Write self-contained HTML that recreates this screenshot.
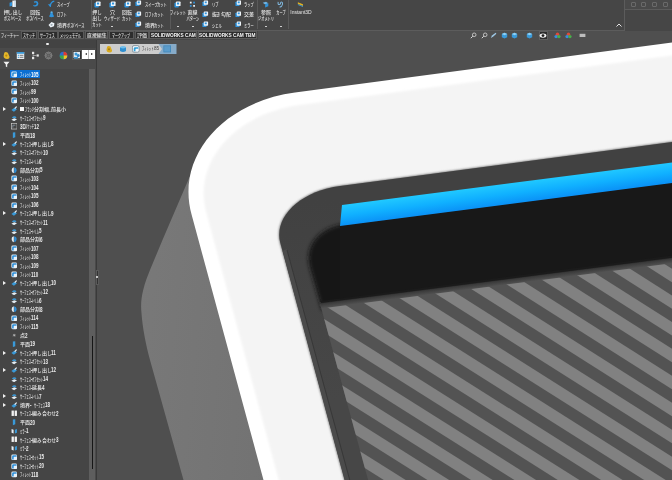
<!DOCTYPE html><html lang="ja"><head><meta charset="utf-8"><title>SOLIDWORKS</title><style>
html,body{margin:0;padding:0;}
body{width:672px;height:480px;overflow:hidden;background:#4f4f4f;position:relative;font-family:"Liberation Sans","Noto Sans CJK JP",sans-serif;color:#dcdcdc;}
#v3d{position:absolute;left:0;top:0;}
.abs{position:absolute;}
#ribbon{position:absolute;left:0;top:0;width:672px;height:30.5px;background:#464646;}
.t{position:absolute;font-size:5.0px;line-height:6px;white-space:nowrap;color:#e6e6e6;font-weight:500;}
.tc{position:absolute;font-size:5.0px;line-height:6px;white-space:nowrap;color:#e6e6e6;font-weight:500;text-align:center;transform:translateX(-50%);}
.sx{display:inline-block;vertical-align:baseline;overflow:visible;white-space:nowrap;}
.sx>span{display:inline-block;transform-origin:0 50%;white-space:nowrap;}
.ic{position:absolute;width:7px;height:7px;}
.sep{position:absolute;top:0;width:1px;height:29px;background:#5a5a5a;}
.dd{position:absolute;top:26px;width:2px;height:1px;background:#cfcfcf;}
#tabs{position:absolute;left:0;top:31px;height:9px;width:257.5px;background:#464646;}
.tab{position:absolute;top:0;height:8px;background:#2d2d2d;border:0.5px solid #5a5a5a;box-sizing:border-box;font-size:5.0px;line-height:6.6px;text-align:center;color:#e4e4e4;font-weight:500;white-space:nowrap;overflow:hidden;}
.tab.act{background:#464646;border-color:#464646;color:#e8e8e8;}
.tab.b{font-weight:bold;color:#f6f6f6;font-size:4.75px;line-height:8.6px;}
#panel{position:absolute;left:0;top:40px;width:97px;height:440px;background:#4a4a4a;border-right:1px solid #3a3a3a;box-sizing:border-box;}
#tree{position:absolute;left:0;top:29px;width:88.5px;height:411px;background:#454545;}
#sbar{position:absolute;left:88.7px;top:29px;width:6px;height:411px;background:#5e5e5e;}
.row{position:absolute;left:19.5px;font-size:5.1px;line-height:8px;height:8px;white-space:nowrap;color:#ececec;font-weight:500;}
.arw{position:absolute;left:2.8px;width:0;height:0;border-left:3px solid #f0f0f0;border-top:2.2px solid transparent;border-bottom:2.2px solid transparent;}
.ri{position:absolute;left:10.5px;width:6.5px;height:6.5px;}
</style></head><body>
<svg id="v3d" width="672" height="480" viewBox="0 0 672 480">
<defs>
<linearGradient id="gblue" gradientUnits="userSpaceOnUse" x1="500" y1="184.7" x2="502.7" y2="205.3">
<stop offset="0" stop-color="#20c8ff"/><stop offset="0.5" stop-color="#10b0ff"/><stop offset="1" stop-color="#0a90f6"/>
</linearGradient>
<linearGradient id="gside" x1="0" y1="0" x2="1" y2="0.2">
<stop offset="0" stop-color="#797979"/><stop offset="1" stop-color="#727272"/>
</linearGradient>
<linearGradient id="gopen" gradientUnits="userSpaceOnUse" x1="0" y1="200" x2="0" y2="400"><stop offset="0" stop-color="#414141"/><stop offset="1" stop-color="#474747"/></linearGradient>
<filter id="b1" x="-10%" y="-10%" width="120%" height="120%"><feGaussianBlur stdDeviation="1.2"/></filter>
<filter id="b2" x="-10%" y="-10%" width="120%" height="120%"><feGaussianBlur stdDeviation="2.2"/></filter>
<filter id="b4" x="-20%" y="-20%" width="140%" height="140%"><feGaussianBlur stdDeviation="4"/></filter>
<clipPath id="cbody"><path d="M700,38.8 L295,92.6 C222,102.3 175.5,157.4 191.7,215 L266.2,490 L700,490 Z"/></clipPath>
<clipPath id="copen"><path d="M700,138.2 L340,186 C300.1,191.3 273.3,216.9 280.3,243 L347.3,490 L700,490 Z"/></clipPath>
<clipPath id="cfloor"><path d="M319.7,302.5 L700,253.5 L700,490 L370.8,490 Z"/></clipPath>
<linearGradient id="gsh" gradientUnits="userSpaceOnUse" x1="500" y1="278.5" x2="500.9" y2="285.5"><stop offset="0" stop-color="#1c1c1c"/><stop offset="0.35" stop-color="#3a3a3a"/><stop offset="1" stop-color="#535353"/></linearGradient>
</defs>
<rect width="672" height="480" fill="#4f4f4f"/>
<!-- side face -->
<path d="M196,162 L162.5,240 L150,270 C143,287 140,300 141.5,313 C142.5,328 146,345 150,360 L186.3,490 L300,490 L300,162 Z" fill="url(#gside)"/>
<!-- body rim -->
<path d="M700,38.8 L295,92.6 C222,102.3 175.5,157.4 191.7,215 L266.2,490 L700,490 Z" fill="#ffffff"/>
<!-- top face -->
<g clip-path="url(#cbody)"><path filter="url(#b1)" d="M700,51.9 L300,105.05 C234.8,113.7 192.6,162.1 206.3,212.5 L281.5,490 L700,490 Z" fill="#f4f4f4"/></g>
<!-- opening -->
<path d="M700,138.2 L340,186 C300.1,191.3 273.3,216.9 280.3,243 L347.3,490 L700,490 Z" fill="#404040" stroke="#9a9a9a" stroke-opacity="0.55" stroke-width="1.6" filter="url(#b1)"/>
<path d="M700,138.2 L340,186 C300.1,191.3 273.3,216.9 280.3,243 L347.3,490 L700,490 Z" fill="url(#gopen)"/>
<g clip-path="url(#copen)">
<!-- wall band -->
<path d="M282.5,251 L347.3,490 L352.3,490 L286.8,249 Z" fill="#4b4b4b"/><path d="M287,250 L352.5,490" stroke="#343434" stroke-width="0.8" fill="none"/>
<!-- black inner -->
<path filter="url(#b2)" d="M700,175 L345,224 C318,228 304,246 310,268 L322,310 L700,310 Z" fill="#181818"/>
<path d="M340,226 L700,179.4 L700,300 L340,303 Z" fill="#181818"/>
<!-- floor -->
<g clip-path="url(#cfloor)">
<rect x="300" y="240" width="400" height="260" fill="#535353"/>
<g fill="#818181">
<polygon points="250.0,-26.3 720.0,273.0 720.0,286.2 250.0,-13.0"/>
<polygon points="250.0,0.3 720.0,299.4 720.0,312.7 250.0,13.7"/>
<polygon points="250.0,27.1 720.0,325.9 720.0,339.2 250.0,40.5"/>
<polygon points="250.0,54.0 720.0,352.6 720.0,365.9 250.0,67.5"/>
<polygon points="250.0,81.0 720.0,379.3 720.0,392.7 250.0,94.6"/>
<polygon points="250.0,108.1 720.0,406.2 720.0,419.6 250.0,121.7"/>
<polygon points="250.0,135.3 720.0,433.1 720.0,446.6 250.0,148.9"/>
<polygon points="250.0,162.6 720.0,460.1 720.0,473.6 250.0,176.2"/>
<polygon points="250.0,189.9 720.0,487.2 720.0,500.7 250.0,203.6"/>
<polygon points="250.0,217.3 720.0,514.3 720.0,527.9 250.0,231.0"/>
<polygon points="250.0,244.7 720.0,541.5 720.0,555.1 250.0,258.4"/>
<polygon points="250.0,272.2 720.0,568.7 720.0,582.3 250.0,285.9"/>
<polygon points="250.0,299.7 720.0,595.9 720.0,609.5 250.0,313.4"/>
<polygon points="250.0,327.2 720.0,623.1 720.0,636.7 250.0,340.9"/>
<polygon points="250.0,354.7 720.0,650.4 720.0,664.0 250.0,368.4"/>
<polygon points="250.0,382.1 720.0,677.6 720.0,691.2 250.0,395.9"/>
<polygon points="250.0,409.6 720.0,704.8 720.0,718.4 250.0,423.3"/>
<polygon points="250.0,437.0 720.0,732.0 720.0,745.5 250.0,450.8"/>
<polygon points="250.0,464.4 720.0,759.1 720.0,772.7 250.0,478.1"/>
<polygon points="250.0,491.8 720.0,786.2 720.0,799.7 250.0,505.4"/>
</g>
<path d="M310,299.7 L700,249.4 L700,259.6 L310,309.9 Z" fill="url(#gsh)"/>
</g>
<path d="M320.6,302.0 L700,253.1" stroke="#1b1b1b" stroke-width="2.2" fill="none"/>
<!-- blue band -->
<path d="M342,205 L700,158.8 L700,179.4 L340,226 Z" fill="url(#gblue)"/>
</g>
</svg>
<div id="ribbon">
<svg class="ic" style="left:8.8px;top:0.2px;width:7.5px;height:7.5px" viewBox="0 0 8 8"><path d="M0.6,3 L3.4,2.2 L3.4,6.2 L0.6,6.8 Z" fill="#2f93dc"/><path d="M3.6,0.6 H7.2 V7.4 H3.6 Z" fill="#eef4f9"/><path d="M5.6,0.6 H7.2 V7.4 H5.6 Z" fill="#c9dbe8"/></svg>
<div class="tc" style="left:12.5px;top:8.5px"><span class="sx" style="width:4.92px"><span style="transform:scaleX(0.985)">押</span></span><span class="sx" style="width:4.40px"><span style="transform:scaleX(0.88)">し</span></span><span class="sx" style="width:4.92px"><span style="transform:scaleX(0.985)">出</span></span><span class="sx" style="width:4.40px"><span style="transform:scaleX(0.88)">し</span></span><br><span class="sx" style="width:6.40px"><span style="transform:scaleX(0.64)">ボス</span></span><span class="sx"><span style="transform:scaleX(0.999)">/</span></span><span class="sx" style="width:9.60px"><span style="transform:scaleX(0.64)">ベース</span></span></div>
<svg class="ic" style="left:31.8px;top:0.0px;width:7.5px;height:7.5px" viewBox="0 0 8 8"><path d="M2,1.6 Q6.8,0 6.8,3.8 Q6.6,7.4 2.6,7 Q0.8,6.6 1.4,5.2 Q4.8,6.2 5,3.8 Q5,2.2 2.2,2.8 Z" fill="#2f93dc"/></svg>
<div class="tc" style="left:35px;top:8.5px"><span class="sx" style="width:9.85px"><span style="transform:scaleX(0.985)">回転</span></span><br><span class="sx" style="width:6.40px"><span style="transform:scaleX(0.64)">ボス</span></span><span class="sx"><span style="transform:scaleX(0.999)">/</span></span><span class="sx" style="width:9.60px"><span style="transform:scaleX(0.64)">ベース</span></span></div>
<svg class="ic" style="left:48.0px;top:0.0px;width:7px;height:7px" viewBox="0 0 8 8"><path d="M0.8,4.6 L2.6,7 Q3.2,2 7.2,1.4" stroke="#2f93dc" stroke-width="1.5" fill="none"/></svg>
<div class="t" style="left:57px;top:0.5px"><span class="sx" style="width:12.80px"><span style="transform:scaleX(0.64)">スイープ</span></span></div>
<svg class="ic" style="left:48.0px;top:10.5px;width:7px;height:7px" viewBox="0 0 8 8"><path d="M3,0.8 H5.2 L5.6,3.4 L7,6.4 Q4,8 1.2,6.4 L2.6,3.4 Z" fill="#2f93dc"/><ellipse cx="4.1" cy="1.1" rx="1.2" ry="0.6" fill="#8fd0f4"/></svg>
<div class="t" style="left:57px;top:11px"><span class="sx" style="width:9.60px"><span style="transform:scaleX(0.64)">ロフト</span></span></div>
<svg class="ic" style="left:48.0px;top:21.0px;width:7px;height:7px" viewBox="0 0 8 8"><path d="M0.6,4.6 L4,1 L7.4,2.6 L6.8,6 L3,7.4 Z" fill="#eef4f9"/><path d="M2.6,4.4 L4.6,3.2 L5.6,4.6 L3.6,5.8 Z" fill="#9aa7b0"/></svg>
<div class="t" style="left:57px;top:21.5px"><span class="sx" style="width:9.85px"><span style="transform:scaleX(0.985)">境界</span></span><span class="sx" style="width:6.40px"><span style="transform:scaleX(0.64)">ボス</span></span><span class="sx"><span style="transform:scaleX(0.999)">/</span></span><span class="sx" style="width:9.60px"><span style="transform:scaleX(0.64)">ベース</span></span></div>
<div class="sep" style="left:90.5px"></div>
<svg class="ic" style="left:93.5px;top:0.7px;width:7px;height:7px" viewBox="0 0 8 8"><rect x="0.5" y="2" width="5" height="5.5" rx="0.8" fill="#2f93dc"/><rect x="2.2" y="0.5" width="5.3" height="5.3" rx="0.8" fill="#eef4f9"/><rect x="3.4" y="1.8" width="2.4" height="2.2" fill="#2f93dc"/></svg>
<div class="tc" style="left:97px;top:8.5px"><span class="sx" style="width:4.92px"><span style="transform:scaleX(0.985)">押</span></span><span class="sx" style="width:4.40px"><span style="transform:scaleX(0.88)">し</span></span><br><span class="sx" style="width:4.92px"><span style="transform:scaleX(0.985)">出</span></span><span class="sx" style="width:4.40px"><span style="transform:scaleX(0.88)">し</span></span><br><span class="sx" style="width:9.60px"><span style="transform:scaleX(0.64)">カット</span></span></div>
<svg class="ic" style="left:108.5px;top:0.7px;width:7px;height:7px" viewBox="0 0 8 8"><rect x="0.5" y="2" width="5" height="5.5" rx="0.8" fill="#2f93dc"/><rect x="2.2" y="0.5" width="5.3" height="5.3" rx="0.8" fill="#eef4f9"/><rect x="3.4" y="1.8" width="2.4" height="2.2" fill="#2f93dc"/></svg>
<div class="tc" style="left:112px;top:8.5px"><span class="sx" style="width:4.92px"><span style="transform:scaleX(0.985)">穴</span></span><br><span class="sx" style="width:16.00px"><span style="transform:scaleX(0.64)">ウィザード</span></span></div>
<svg class="ic" style="left:123.5px;top:0.7px;width:7px;height:7px" viewBox="0 0 8 8"><rect x="0.5" y="2" width="5" height="5.5" rx="0.8" fill="#2f93dc"/><rect x="2.2" y="0.5" width="5.3" height="5.3" rx="0.8" fill="#eef4f9"/><rect x="3.4" y="1.8" width="2.4" height="2.2" fill="#2f93dc"/></svg>
<div class="tc" style="left:127px;top:8.5px"><span class="sx" style="width:9.85px"><span style="transform:scaleX(0.985)">回転</span></span><br><span class="sx" style="width:9.60px"><span style="transform:scaleX(0.64)">カット</span></span></div>
<div class="dd" style="left:111px"></div>
<svg class="ic" style="left:135.4px;top:0.2px;width:6.5px;height:6.5px" viewBox="0 0 8 8"><rect x="0.5" y="2" width="5" height="5.5" rx="0.8" fill="#2f93dc"/><rect x="2.2" y="0.5" width="5.3" height="5.3" rx="0.8" fill="#eef4f9"/><rect x="3.4" y="1.8" width="2.4" height="2.2" fill="#2f93dc"/></svg>
<div class="t" style="left:144.5px;top:0.5px"><span class="sx" style="width:12.80px"><span style="transform:scaleX(0.64)">スイープ</span></span><span class="sx"><span style="transform:scaleX(0.999)"> </span></span><span class="sx" style="width:9.60px"><span style="transform:scaleX(0.64)">カット</span></span></div>
<svg class="ic" style="left:135.4px;top:10.8px;width:6.5px;height:6.5px" viewBox="0 0 8 8"><rect x="0.5" y="2" width="5" height="5.5" rx="0.8" fill="#2f93dc"/><rect x="2.2" y="0.5" width="5.3" height="5.3" rx="0.8" fill="#eef4f9"/><rect x="3.4" y="1.8" width="2.4" height="2.2" fill="#2f93dc"/></svg>
<div class="t" style="left:144.5px;top:11px"><span class="sx" style="width:9.60px"><span style="transform:scaleX(0.64)">ロフト</span></span><span class="sx"><span style="transform:scaleX(0.999)"> </span></span><span class="sx" style="width:9.60px"><span style="transform:scaleX(0.64)">カット</span></span></div>
<svg class="ic" style="left:135.4px;top:21.2px;width:6.5px;height:6.5px" viewBox="0 0 8 8"><rect x="0.5" y="2" width="5" height="5.5" rx="0.8" fill="#2f93dc"/><rect x="2.2" y="0.5" width="5.3" height="5.3" rx="0.8" fill="#eef4f9"/><rect x="3.4" y="1.8" width="2.4" height="2.2" fill="#2f93dc"/></svg>
<div class="t" style="left:144.5px;top:21.5px"><span class="sx" style="width:9.85px"><span style="transform:scaleX(0.985)">境界</span></span><span class="sx" style="width:9.60px"><span style="transform:scaleX(0.64)">カット</span></span></div>
<div class="sep" style="left:170px"></div>
<svg class="ic" style="left:174.3px;top:0.7px;width:7px;height:7px" viewBox="0 0 8 8"><rect x="0.5" y="2" width="5" height="5.5" rx="0.8" fill="#2f93dc"/><rect x="2.2" y="0.5" width="5.3" height="5.3" rx="0.8" fill="#eef4f9"/><rect x="3.4" y="1.8" width="2.4" height="2.2" fill="#2f93dc"/></svg>
<div class="tc" style="left:177.8px;top:8.5px"><span class="sx" style="width:16.00px"><span style="transform:scaleX(0.64)">フィレット</span></span></div>
<div class="dd" style="left:176.8px"></div>
<svg class="ic" style="left:189.3px;top:0.7px;width:7px;height:7px" viewBox="0 0 8 8"><rect x="1" y="0.8" width="2" height="2" fill="#eef4f9"/><rect x="4.8" y="0.8" width="2" height="2" fill="#2f93dc"/><rect x="1" y="4.6" width="2" height="2" fill="#2f93dc"/><rect x="4.8" y="4.6" width="2" height="2" fill="#eef4f9"/></svg>
<div class="tc" style="left:192.8px;top:8.5px"><span class="sx" style="width:9.85px"><span style="transform:scaleX(0.985)">直線</span></span><br><span class="sx" style="width:12.80px"><span style="transform:scaleX(0.64)">パターン</span></span></div>
<div class="dd" style="left:191.8px"></div>
<svg class="ic" style="left:202.1px;top:0.2px;width:6.5px;height:6.5px" viewBox="0 0 8 8"><rect x="0.5" y="2" width="5" height="5.5" rx="0.8" fill="#2f93dc"/><rect x="2.2" y="0.5" width="5.3" height="5.3" rx="0.8" fill="#eef4f9"/><rect x="3.4" y="1.8" width="2.4" height="2.2" fill="#2f93dc"/></svg>
<div class="t" style="left:211.5px;top:0.5px"><span class="sx" style="width:6.40px"><span style="transform:scaleX(0.64)">リブ</span></span></div>
<svg class="ic" style="left:234.8px;top:0.2px;width:6.5px;height:6.5px" viewBox="0 0 8 8"><rect x="0.5" y="2" width="5" height="5.5" rx="0.8" fill="#2f93dc"/><rect x="2.2" y="0.5" width="5.3" height="5.3" rx="0.8" fill="#eef4f9"/><rect x="3.4" y="1.8" width="2.4" height="2.2" fill="#2f93dc"/></svg>
<div class="t" style="left:244px;top:0.5px"><span class="sx" style="width:9.60px"><span style="transform:scaleX(0.64)">ラップ</span></span></div>
<svg class="ic" style="left:202.1px;top:10.8px;width:6.5px;height:6.5px" viewBox="0 0 8 8"><rect x="0.5" y="2" width="5" height="5.5" rx="0.8" fill="#2f93dc"/><rect x="2.2" y="0.5" width="5.3" height="5.3" rx="0.8" fill="#eef4f9"/><rect x="3.4" y="1.8" width="2.4" height="2.2" fill="#2f93dc"/></svg>
<div class="t" style="left:211.5px;top:11px"><span class="sx" style="width:4.92px"><span style="transform:scaleX(0.985)">抜</span></span><span class="sx" style="width:4.40px"><span style="transform:scaleX(0.88)">き</span></span><span class="sx" style="width:9.85px"><span style="transform:scaleX(0.985)">勾配</span></span></div>
<svg class="ic" style="left:234.8px;top:10.8px;width:6.5px;height:6.5px" viewBox="0 0 8 8"><rect x="0.5" y="2" width="5" height="5.5" rx="0.8" fill="#2f93dc"/><rect x="2.2" y="0.5" width="5.3" height="5.3" rx="0.8" fill="#eef4f9"/><rect x="3.4" y="1.8" width="2.4" height="2.2" fill="#2f93dc"/></svg>
<div class="t" style="left:244px;top:11px"><span class="sx" style="width:9.85px"><span style="transform:scaleX(0.985)">交差</span></span></div>
<svg class="ic" style="left:202.1px;top:21.2px;width:6.5px;height:6.5px" viewBox="0 0 8 8"><rect x="0.5" y="2" width="5" height="5.5" rx="0.8" fill="#2f93dc"/><rect x="2.2" y="0.5" width="5.3" height="5.3" rx="0.8" fill="#eef4f9"/><rect x="3.4" y="1.8" width="2.4" height="2.2" fill="#2f93dc"/></svg>
<div class="t" style="left:211.5px;top:21.5px"><span class="sx" style="width:9.60px"><span style="transform:scaleX(0.64)">シェル</span></span></div>
<svg class="ic" style="left:234.8px;top:21.2px;width:6.5px;height:6.5px" viewBox="0 0 8 8"><rect x="0.5" y="2" width="5" height="5.5" rx="0.8" fill="#2f93dc"/><rect x="2.2" y="0.5" width="5.3" height="5.3" rx="0.8" fill="#eef4f9"/><rect x="3.4" y="1.8" width="2.4" height="2.2" fill="#2f93dc"/></svg>
<div class="t" style="left:244px;top:21.5px"><span class="sx" style="width:9.60px"><span style="transform:scaleX(0.64)">ミラー</span></span></div>
<div class="sep" style="left:257px"></div>
<svg class="ic" style="left:262.0px;top:0.7px;width:7px;height:7px" viewBox="0 0 8 8"><path d="M0.8,2 L4.6,0.8 L7.2,2.6 L3.6,4 Z" fill="#6fb4e4"/><path d="M3.6,4 L7.2,2.6 V6 L3.6,7.4 Z" fill="#2f93dc"/></svg>
<div class="tc" style="left:265.5px;top:8.5px"><span class="sx" style="width:9.85px"><span style="transform:scaleX(0.985)">参照</span></span><br><span class="sx" style="width:16.00px"><span style="transform:scaleX(0.64)">ジオメトリ</span></span></div>
<div class="dd" style="left:264.5px"></div>
<svg class="ic" style="left:277.0px;top:0.7px;width:7px;height:7px" viewBox="0 0 8 8"><path d="M1.4,1 Q0.6,4.2 2.8,4 Q4.4,3.8 4,1.4 M4.4,1.2 Q6.8,1 6.2,4 Q5.8,6.6 3,7" stroke="#7fb6dc" stroke-width="1.2" fill="none"/></svg>
<div class="tc" style="left:280.5px;top:8.5px"><span class="sx" style="width:9.60px"><span style="transform:scaleX(0.64)">カーブ</span></span></div>
<div class="dd" style="left:279.5px"></div>
<div class="sep" style="left:287.5px"></div>
<svg class="ic" style="left:297.0px;top:0.7px;width:7px;height:7px" viewBox="0 0 8 8"><path d="M1,1.4 L6.8,3.6 L6.8,5.6 L1,3.4 Z" fill="#e3b320"/><path d="M1,3.6 L6.8,5.8 L6.8,6.8 L1,4.6 Z" fill="#3a9ad9"/></svg>
<div class="tc" style="left:300.5px;top:8.5px"><span class="sx"><span style="transform:scaleX(0.999)">Instant3D</span></span></div>
<div class="abs" style="left:0;top:30px;width:625px;height:1px;background:#5c5c5c"></div>
<div class="abs" style="left:624px;top:0;width:1px;height:30px;background:#5c5c5c"></div>
<div class="abs" style="left:625px;top:0;width:47px;height:9px;background:#4a4a4a;border-bottom:1px solid #5c5c5c"></div>
<div class="abs" style="left:630.5px;top:1.5px;width:5px;height:5px;border:0.7px solid #6a6a6a;box-sizing:border-box;border-radius:1px"></div>
<div class="abs" style="left:640.5px;top:1.5px;width:5px;height:5px;border:0.7px solid #6a6a6a;box-sizing:border-box;border-radius:1px"></div>
<div class="abs" style="left:651.5px;top:1.5px;width:5px;height:5px;border:0.7px solid #6a6a6a;box-sizing:border-box;border-radius:1px"></div>
<div class="abs" style="left:662.5px;top:1.5px;width:5px;height:5px;border:0.7px solid #6a6a6a;box-sizing:border-box;border-radius:1px"></div>
<svg class="abs" style="left:615px;top:22px" width="8" height="6" viewBox="0 0 8 6"><path d="M1.5,4.5 L4,2 L6.5,4.5" stroke="#e6e6e6" stroke-width="1" fill="none"/></svg>
</div>
<div id="tabs">
<div class="tab act" style="left:0px;width:20.5px"><span class="sx" style="width:18.00px"><span style="transform:scaleX(0.6)">フィーチャー</span></span></div>
<div class="tab " style="left:21px;width:15.5px"><span class="sx" style="width:12.00px"><span style="transform:scaleX(0.6)">スケッチ</span></span></div>
<div class="tab " style="left:37.5px;width:20.0px"><span class="sx" style="width:15.00px"><span style="transform:scaleX(0.6)">サーフェス</span></span></div>
<div class="tab " style="left:58.2px;width:25.5px"><span class="sx" style="width:12.00px"><span style="transform:scaleX(0.6)">メッシュ</span></span><span class="sx"><span style="transform:scaleX(0.999)"> </span></span><span class="sx" style="width:9.00px"><span style="transform:scaleX(0.6)">モデル</span></span></div>
<div class="tab " style="left:84.5px;width:23.700000000000003px"><span class="sx" style="width:19.70px"><span style="transform:scaleX(0.985)">直接編集</span></span></div>
<div class="tab " style="left:109px;width:24.5px"><span class="sx" style="width:18.00px"><span style="transform:scaleX(0.6)">マークアップ</span></span></div>
<div class="tab " style="left:134.5px;width:14.0px"><span class="sx" style="width:9.85px"><span style="transform:scaleX(0.985)">評価</span></span></div>
<div class="tab b" style="left:149.3px;width:47.69999999999999px"><span class="sx"><span style="transform:scaleX(0.999)">SOLIDWORKS CAM</span></span></div>
<div class="tab b" style="left:198px;width:59px"><span class="sx"><span style="transform:scaleX(0.999)">SOLIDWORKS CAM TBM</span></span></div>
</div>
<div id="panel">
<div class="abs" style="left:0;top:0;width:96px;height:7.5px;background:#434343"></div>
<div class="abs" style="left:46.3px;top:2.6px;width:2.6px;height:2.6px;border-radius:50%;background:#f0f0f0"></div>
<svg class="abs" style="left:2px;top:10.5px" width="9" height="9" viewBox="0 0 9 9"><path d="M2,3 Q2,0.8 4,1 Q6.5,1.2 6.5,3.2 L7.6,6 Q7.6,8.2 5,8 Q1.5,7.6 1.6,5 Z" fill="#e3b62a"/><circle cx="4.3" cy="4.6" r="1.1" fill="#b98a10"/></svg>
<svg class="abs" style="left:16px;top:10.5px" width="9" height="9" viewBox="0 0 9 9"><rect x="0.8" y="1" width="7.4" height="7" fill="#e8eef2"/><rect x="0.8" y="1" width="7.4" height="1.8" fill="#3a9ad9"/><rect x="1.8" y="3.8" width="1.4" height="1" fill="#3a9ad9"/><rect x="3.8" y="3.8" width="3.6" height="1" fill="#777"/><rect x="1.8" y="5.8" width="1.4" height="1" fill="#3a9ad9"/><rect x="3.8" y="5.8" width="3.6" height="1" fill="#777"/></svg>
<svg class="abs" style="left:30.5px;top:10.5px" width="9" height="9" viewBox="0 0 9 9"><rect x="1" y="0.8" width="2.2" height="2.2" fill="#e8e8e8"/><rect x="1" y="6" width="2.2" height="2.2" fill="#e8e8e8"/><rect x="5.6" y="3.4" width="2.2" height="2.2" fill="#e8e8e8"/><path d="M2.1,3 V6 M2.1,4.5 H5.6" stroke="#bdbdbd" stroke-width="0.7" fill="none"/></svg>
<svg class="abs" style="left:44px;top:10.5px" width="9" height="9" viewBox="0 0 9 9"><circle cx="4.5" cy="4.5" r="3.4" fill="none" stroke="#8a8a8a" stroke-width="0.8"/><path d="M4.5,1.8 L7.2,4.5 L4.5,7.2 L1.8,4.5 Z" fill="none" stroke="#a0a0a0" stroke-width="0.7"/><path d="M4.5,0.5 V8.5 M0.5,4.5 H8.5" stroke="#7a7a7a" stroke-width="0.5"/></svg>
<svg class="abs" style="left:58.5px;top:10.5px" width="9" height="9" viewBox="0 0 9 9"><circle cx="4.5" cy="4.5" r="3.8" fill="#2c6fd0"/><path d="M4.5,4.5 L4.5,0.7 A3.8,3.8 0 0 1 8.3,4.5 Z" fill="#e23b2e"/><path d="M4.5,4.5 L8.3,4.5 A3.8,3.8 0 0 1 4.5,8.3 Z" fill="#f2c41d"/><path d="M4.5,4.5 L4.5,8.3 A3.8,3.8 0 0 1 0.7,4.5 Z" fill="#3aa845"/></svg>
<div class="abs" style="left:71.5px;top:9.5px;width:10.5px;height:10.5px;background:#2f2f2f;border:0.5px solid #5a5a5a;box-sizing:border-box"></div>
<svg class="abs" style="left:73px;top:10.5px" width="9" height="9" viewBox="0 0 9 9"><rect x="0.5" y="0.8" width="6.5" height="6.5" fill="#dfeaf2"/><circle cx="3" cy="3" r="1.5" fill="#3a9ad9"/><circle cx="5.2" cy="4.6" r="1.5" fill="#2f86c8"/><rect x="1" y="6" width="4" height="1.6" fill="#3a9ad9"/></svg>
<div class="abs" style="left:81.7px;top:9.8px;width:13.6px;height:9px;background:#ffffff"></div>
<div class="abs" style="left:84.5px;top:12.6px;width:0;height:0;border-right:2.2px solid #222;border-top:1.7px solid transparent;border-bottom:1.7px solid transparent"></div>
<div class="abs" style="left:90.6px;top:12.6px;width:0;height:0;border-left:2.2px solid #222;border-top:1.7px solid transparent;border-bottom:1.7px solid transparent"></div>
<div class="abs" style="left:88.2px;top:9.8px;width:0.6px;height:9px;background:#bbb"></div>
<svg class="abs" style="left:2.5px;top:20.5px" width="7" height="7" viewBox="0 0 7 7"><path d="M0.5,0.8 H6.5 L4.2,3.4 V6.3 L2.8,5.4 V3.4 Z" fill="#f2f2f2"/></svg>
<div id="tree"></div><div id="sbar"></div>
<div class="abs" style="left:91.6px;top:296px;width:1.3px;height:133px;background:#161616"></div>
<div class="abs" style="left:9.5px;top:29.9px;width:30px;height:8.4px;background:#0b6fd3"></div>
<svg class="ri" style="top:31.0px" viewBox="0 0 7 7"><rect x="0.4" y="0.6" width="6.2" height="6" rx="1.4" fill="#eaf3fa"/><path d="M1.2,6 V2.6 Q1.2,1.4 2.6,1.4 H6 V3 H3.6 Q2.9,3 2.9,3.8 V6 Z" fill="#2f8fd8"/></svg>
<div class="row" style="top:30.1px;color:#ffffff"><span class="sx" style="width:11.22px"><span style="transform:scaleX(0.44)">フィレット</span></span><span class="sx" style="width:7.52px;font-size:1.34em;line-height:0;font-weight:bold;position:relative;top:0.55px"><span style="transform:scaleX(0.66)">105</span></span></div>
<svg class="ri" style="top:39.7px" viewBox="0 0 7 7"><rect x="0.4" y="0.6" width="6.2" height="6" rx="1.4" fill="#eaf3fa"/><path d="M1.2,6 V2.6 Q1.2,1.4 2.6,1.4 H6 V3 H3.6 Q2.9,3 2.9,3.8 V6 Z" fill="#2f8fd8"/></svg>
<div class="row" style="top:38.8px"><span class="sx" style="width:11.22px"><span style="transform:scaleX(0.44)">フィレット</span></span><span class="sx" style="width:7.52px;font-size:1.34em;line-height:0;font-weight:bold;position:relative;top:0.55px"><span style="transform:scaleX(0.66)">102</span></span></div>
<svg class="ri" style="top:48.4px" viewBox="0 0 7 7"><rect x="0.4" y="0.6" width="6.2" height="6" rx="1.4" fill="#eaf3fa"/><path d="M1.2,6 V2.6 Q1.2,1.4 2.6,1.4 H6 V3 H3.6 Q2.9,3 2.9,3.8 V6 Z" fill="#2f8fd8"/></svg>
<div class="row" style="top:47.5px"><span class="sx" style="width:11.22px"><span style="transform:scaleX(0.44)">フィレット</span></span><span class="sx" style="width:5.02px;font-size:1.34em;line-height:0;font-weight:bold;position:relative;top:0.55px"><span style="transform:scaleX(0.66)">99</span></span></div>
<svg class="ri" style="top:57.1px" viewBox="0 0 7 7"><rect x="0.4" y="0.6" width="6.2" height="6" rx="1.4" fill="#eaf3fa"/><path d="M1.2,6 V2.6 Q1.2,1.4 2.6,1.4 H6 V3 H3.6 Q2.9,3 2.9,3.8 V6 Z" fill="#2f8fd8"/></svg>
<div class="row" style="top:56.2px"><span class="sx" style="width:11.22px"><span style="transform:scaleX(0.44)">フィレット</span></span><span class="sx" style="width:7.52px;font-size:1.34em;line-height:0;font-weight:bold;position:relative;top:0.55px"><span style="transform:scaleX(0.66)">100</span></span></div>
<div class="arw" style="top:66.9px"></div>
<svg class="ri" style="top:65.8px" viewBox="0 0 7 7"><path d="M0.4,4.4 L3.6,2 L6.4,3.4 L3.2,6.2 Z" fill="#3a9ad9"/><path d="M3.4,2.4 L5.6,0.4 L6.6,1 L4.6,3.2 Z" fill="#e6eef4"/></svg>
<div class="row" style="top:64.9px"><span style="display:inline-block;width:4.4px;height:4.4px;background:#f4f4f4;color:#f4f4f4;font-size:3px;line-height:4.4px;vertical-align:top;margin:1.9px 0.6px 0 0.4px;overflow:hidden">■</span><span class="sx" style="width:8.98px"><span style="transform:scaleX(0.44)">フランジ</span></span><span class="sx" style="width:15.07px"><span style="transform:scaleX(0.985)">分割幅</span></span><span class="sx" style="width:2.51px;font-size:1.34em;line-height:0;font-weight:bold;position:relative;top:0.55px"><span style="transform:scaleX(0.66)">_</span></span><span class="sx" style="width:15.07px"><span style="transform:scaleX(0.985)">前長小</span></span></div>
<svg class="ri" style="top:74.5px" viewBox="0 0 7 7"><path d="M0.4,5 L3.4,3.4 L6.6,4.6 L3.4,6.6 Z" fill="#e6eef4"/><path d="M1,2.6 Q3.4,0.2 6,2.4 L4.6,3.4 Q3.4,2.4 2.2,3.4 Z" fill="#3a9ad9"/></svg>
<div class="row" style="top:73.6px"><span class="sx" style="width:11.22px"><span style="transform:scaleX(0.44)">サーフェス</span></span><span class="sx" style="width:1.50px;font-size:1.34em;line-height:0;font-weight:bold;position:relative;top:0.55px"><span style="transform:scaleX(0.66)">-</span></span><span class="sx" style="width:11.22px"><span style="transform:scaleX(0.44)">オフセット</span></span><span class="sx" style="width:2.51px;font-size:1.34em;line-height:0;font-weight:bold;position:relative;top:0.55px"><span style="transform:scaleX(0.66)">9</span></span></div>
<svg class="ri" style="top:83.2px" viewBox="0 0 7 7"><rect x="0.5" y="0.7" width="6" height="5.8" fill="none" stroke="#cfcfcf" stroke-width="0.7"/><path d="M2,5 V2.4 H4.6" stroke="#9ab" stroke-width="0.7" fill="none"/></svg>
<div class="row" style="top:82.3px"><span class="sx" style="width:5.76px;font-size:1.34em;line-height:0;font-weight:bold;position:relative;top:0.55px"><span style="transform:scaleX(0.66)">3D</span></span><span class="sx" style="width:8.98px"><span style="transform:scaleX(0.44)">スケッチ</span></span><span class="sx" style="width:5.02px;font-size:1.34em;line-height:0;font-weight:bold;position:relative;top:0.55px"><span style="transform:scaleX(0.66)">12</span></span></div>
<svg class="ri" style="top:91.9px" viewBox="0 0 7 7"><path d="M2,0.6 L4.6,0.2 L4.6,5.6 L2,6.6 Z" fill="#3a9ad9"/></svg>
<div class="row" style="top:91.0px"><span class="sx" style="width:10.05px"><span style="transform:scaleX(0.985)">平面</span></span><span class="sx" style="width:5.02px;font-size:1.34em;line-height:0;font-weight:bold;position:relative;top:0.55px"><span style="transform:scaleX(0.66)">18</span></span></div>
<div class="arw" style="top:101.7px"></div>
<svg class="ri" style="top:100.6px" viewBox="0 0 7 7"><path d="M0.4,4.4 L3.6,2 L6.4,3.4 L3.2,6.2 Z" fill="#3a9ad9"/><path d="M3.4,2.4 L5.6,0.4 L6.6,1 L4.6,3.2 Z" fill="#e6eef4"/></svg>
<div class="row" style="top:99.7px"><span class="sx" style="width:11.22px"><span style="transform:scaleX(0.44)">サーフェス</span></span><span class="sx" style="width:1.50px;font-size:1.34em;line-height:0;font-weight:bold;position:relative;top:0.55px"><span style="transform:scaleX(0.66)">-</span></span><span class="sx" style="width:5.02px"><span style="transform:scaleX(0.985)">押</span></span><span class="sx" style="width:4.49px"><span style="transform:scaleX(0.88)">し</span></span><span class="sx" style="width:5.02px"><span style="transform:scaleX(0.985)">出</span></span><span class="sx" style="width:4.49px"><span style="transform:scaleX(0.88)">し</span></span><span class="sx" style="width:2.51px;font-size:1.34em;line-height:0;font-weight:bold;position:relative;top:0.55px"><span style="transform:scaleX(0.66)">8</span></span></div>
<svg class="ri" style="top:109.3px" viewBox="0 0 7 7"><path d="M0.4,5 L3.4,3.4 L6.6,4.6 L3.4,6.6 Z" fill="#e6eef4"/><path d="M1,2.6 Q3.4,0.2 6,2.4 L4.6,3.4 Q3.4,2.4 2.2,3.4 Z" fill="#3a9ad9"/></svg>
<div class="row" style="top:108.4px"><span class="sx" style="width:11.22px"><span style="transform:scaleX(0.44)">サーフェス</span></span><span class="sx" style="width:1.50px;font-size:1.34em;line-height:0;font-weight:bold;position:relative;top:0.55px"><span style="transform:scaleX(0.66)">-</span></span><span class="sx" style="width:11.22px"><span style="transform:scaleX(0.44)">オフセット</span></span><span class="sx" style="width:5.02px;font-size:1.34em;line-height:0;font-weight:bold;position:relative;top:0.55px"><span style="transform:scaleX(0.66)">10</span></span></div>
<svg class="ri" style="top:118.0px" viewBox="0 0 7 7"><path d="M0.4,5 L3.4,3.4 L6.6,4.6 L3.4,6.6 Z" fill="#e6eef4"/><path d="M1,2.6 Q3.4,0.2 6,2.4 L4.6,3.4 Q3.4,2.4 2.2,3.4 Z" fill="#3a9ad9"/></svg>
<div class="row" style="top:117.1px"><span class="sx" style="width:11.22px"><span style="transform:scaleX(0.44)">サーフェス</span></span><span class="sx" style="width:1.50px;font-size:1.34em;line-height:0;font-weight:bold;position:relative;top:0.55px"><span style="transform:scaleX(0.66)">-</span></span><span class="sx" style="width:6.73px"><span style="transform:scaleX(0.44)">トリム</span></span><span class="sx" style="width:2.51px;font-size:1.34em;line-height:0;font-weight:bold;position:relative;top:0.55px"><span style="transform:scaleX(0.66)">6</span></span></div>
<svg class="ri" style="top:126.7px" viewBox="0 0 7 7"><path d="M3.4,0.4 Q6.4,1 6,4 Q5.6,6.4 3.4,6.6 Z" fill="#2f8fd8"/><path d="M3,0.4 Q0.4,1 0.8,4 Q1.2,6.4 3,6.6 Z" fill="#e6eef4"/></svg>
<div class="row" style="top:125.8px"><span class="sx" style="width:20.09px"><span style="transform:scaleX(0.985)">部品分割</span></span><span class="sx" style="width:2.51px;font-size:1.34em;line-height:0;font-weight:bold;position:relative;top:0.55px"><span style="transform:scaleX(0.66)">5</span></span></div>
<svg class="ri" style="top:135.4px" viewBox="0 0 7 7"><rect x="0.4" y="0.6" width="6.2" height="6" rx="1.4" fill="#eaf3fa"/><path d="M1.2,6 V2.6 Q1.2,1.4 2.6,1.4 H6 V3 H3.6 Q2.9,3 2.9,3.8 V6 Z" fill="#2f8fd8"/></svg>
<div class="row" style="top:134.5px"><span class="sx" style="width:11.22px"><span style="transform:scaleX(0.44)">フィレット</span></span><span class="sx" style="width:7.52px;font-size:1.34em;line-height:0;font-weight:bold;position:relative;top:0.55px"><span style="transform:scaleX(0.66)">103</span></span></div>
<svg class="ri" style="top:144.1px" viewBox="0 0 7 7"><rect x="0.4" y="0.6" width="6.2" height="6" rx="1.4" fill="#eaf3fa"/><path d="M1.2,6 V2.6 Q1.2,1.4 2.6,1.4 H6 V3 H3.6 Q2.9,3 2.9,3.8 V6 Z" fill="#2f8fd8"/></svg>
<div class="row" style="top:143.2px"><span class="sx" style="width:11.22px"><span style="transform:scaleX(0.44)">フィレット</span></span><span class="sx" style="width:7.52px;font-size:1.34em;line-height:0;font-weight:bold;position:relative;top:0.55px"><span style="transform:scaleX(0.66)">104</span></span></div>
<svg class="ri" style="top:152.8px" viewBox="0 0 7 7"><rect x="0.4" y="0.6" width="6.2" height="6" rx="1.4" fill="#eaf3fa"/><path d="M1.2,6 V2.6 Q1.2,1.4 2.6,1.4 H6 V3 H3.6 Q2.9,3 2.9,3.8 V6 Z" fill="#2f8fd8"/></svg>
<div class="row" style="top:151.9px"><span class="sx" style="width:11.22px"><span style="transform:scaleX(0.44)">フィレット</span></span><span class="sx" style="width:7.52px;font-size:1.34em;line-height:0;font-weight:bold;position:relative;top:0.55px"><span style="transform:scaleX(0.66)">105</span></span></div>
<svg class="ri" style="top:161.5px" viewBox="0 0 7 7"><rect x="0.4" y="0.6" width="6.2" height="6" rx="1.4" fill="#eaf3fa"/><path d="M1.2,6 V2.6 Q1.2,1.4 2.6,1.4 H6 V3 H3.6 Q2.9,3 2.9,3.8 V6 Z" fill="#2f8fd8"/></svg>
<div class="row" style="top:160.6px"><span class="sx" style="width:11.22px"><span style="transform:scaleX(0.44)">フィレット</span></span><span class="sx" style="width:7.52px;font-size:1.34em;line-height:0;font-weight:bold;position:relative;top:0.55px"><span style="transform:scaleX(0.66)">106</span></span></div>
<div class="arw" style="top:171.3px"></div>
<svg class="ri" style="top:170.2px" viewBox="0 0 7 7"><path d="M0.4,4.4 L3.6,2 L6.4,3.4 L3.2,6.2 Z" fill="#3a9ad9"/><path d="M3.4,2.4 L5.6,0.4 L6.6,1 L4.6,3.2 Z" fill="#e6eef4"/></svg>
<div class="row" style="top:169.3px"><span class="sx" style="width:11.22px"><span style="transform:scaleX(0.44)">サーフェス</span></span><span class="sx" style="width:1.50px;font-size:1.34em;line-height:0;font-weight:bold;position:relative;top:0.55px"><span style="transform:scaleX(0.66)">-</span></span><span class="sx" style="width:5.02px"><span style="transform:scaleX(0.985)">押</span></span><span class="sx" style="width:4.49px"><span style="transform:scaleX(0.88)">し</span></span><span class="sx" style="width:5.02px"><span style="transform:scaleX(0.985)">出</span></span><span class="sx" style="width:4.49px"><span style="transform:scaleX(0.88)">し</span></span><span class="sx" style="width:2.51px;font-size:1.34em;line-height:0;font-weight:bold;position:relative;top:0.55px"><span style="transform:scaleX(0.66)">9</span></span></div>
<svg class="ri" style="top:178.9px" viewBox="0 0 7 7"><path d="M0.4,5 L3.4,3.4 L6.6,4.6 L3.4,6.6 Z" fill="#e6eef4"/><path d="M1,2.6 Q3.4,0.2 6,2.4 L4.6,3.4 Q3.4,2.4 2.2,3.4 Z" fill="#3a9ad9"/></svg>
<div class="row" style="top:178.0px"><span class="sx" style="width:11.22px"><span style="transform:scaleX(0.44)">サーフェス</span></span><span class="sx" style="width:1.50px;font-size:1.34em;line-height:0;font-weight:bold;position:relative;top:0.55px"><span style="transform:scaleX(0.66)">-</span></span><span class="sx" style="width:11.22px"><span style="transform:scaleX(0.44)">オフセット</span></span><span class="sx" style="width:5.02px;font-size:1.34em;line-height:0;font-weight:bold;position:relative;top:0.55px"><span style="transform:scaleX(0.66)">11</span></span></div>
<svg class="ri" style="top:187.6px" viewBox="0 0 7 7"><path d="M0.4,5 L3.4,3.4 L6.6,4.6 L3.4,6.6 Z" fill="#e6eef4"/><path d="M1,2.6 Q3.4,0.2 6,2.4 L4.6,3.4 Q3.4,2.4 2.2,3.4 Z" fill="#3a9ad9"/></svg>
<div class="row" style="top:186.7px"><span class="sx" style="width:11.22px"><span style="transform:scaleX(0.44)">サーフェス</span></span><span class="sx" style="width:1.50px;font-size:1.34em;line-height:0;font-weight:bold;position:relative;top:0.55px"><span style="transform:scaleX(0.66)">-</span></span><span class="sx" style="width:6.73px"><span style="transform:scaleX(0.44)">トリム</span></span><span class="sx" style="width:2.51px;font-size:1.34em;line-height:0;font-weight:bold;position:relative;top:0.55px"><span style="transform:scaleX(0.66)">5</span></span></div>
<svg class="ri" style="top:196.3px" viewBox="0 0 7 7"><path d="M3.4,0.4 Q6.4,1 6,4 Q5.6,6.4 3.4,6.6 Z" fill="#2f8fd8"/><path d="M3,0.4 Q0.4,1 0.8,4 Q1.2,6.4 3,6.6 Z" fill="#e6eef4"/></svg>
<div class="row" style="top:195.4px"><span class="sx" style="width:20.09px"><span style="transform:scaleX(0.985)">部品分割</span></span><span class="sx" style="width:2.51px;font-size:1.34em;line-height:0;font-weight:bold;position:relative;top:0.55px"><span style="transform:scaleX(0.66)">6</span></span></div>
<svg class="ri" style="top:205.0px" viewBox="0 0 7 7"><rect x="0.4" y="0.6" width="6.2" height="6" rx="1.4" fill="#eaf3fa"/><path d="M1.2,6 V2.6 Q1.2,1.4 2.6,1.4 H6 V3 H3.6 Q2.9,3 2.9,3.8 V6 Z" fill="#2f8fd8"/></svg>
<div class="row" style="top:204.1px"><span class="sx" style="width:11.22px"><span style="transform:scaleX(0.44)">フィレット</span></span><span class="sx" style="width:7.52px;font-size:1.34em;line-height:0;font-weight:bold;position:relative;top:0.55px"><span style="transform:scaleX(0.66)">107</span></span></div>
<svg class="ri" style="top:213.7px" viewBox="0 0 7 7"><rect x="0.4" y="0.6" width="6.2" height="6" rx="1.4" fill="#eaf3fa"/><path d="M1.2,6 V2.6 Q1.2,1.4 2.6,1.4 H6 V3 H3.6 Q2.9,3 2.9,3.8 V6 Z" fill="#2f8fd8"/></svg>
<div class="row" style="top:212.8px"><span class="sx" style="width:11.22px"><span style="transform:scaleX(0.44)">フィレット</span></span><span class="sx" style="width:7.52px;font-size:1.34em;line-height:0;font-weight:bold;position:relative;top:0.55px"><span style="transform:scaleX(0.66)">108</span></span></div>
<svg class="ri" style="top:222.4px" viewBox="0 0 7 7"><rect x="0.4" y="0.6" width="6.2" height="6" rx="1.4" fill="#eaf3fa"/><path d="M1.2,6 V2.6 Q1.2,1.4 2.6,1.4 H6 V3 H3.6 Q2.9,3 2.9,3.8 V6 Z" fill="#2f8fd8"/></svg>
<div class="row" style="top:221.5px"><span class="sx" style="width:11.22px"><span style="transform:scaleX(0.44)">フィレット</span></span><span class="sx" style="width:7.52px;font-size:1.34em;line-height:0;font-weight:bold;position:relative;top:0.55px"><span style="transform:scaleX(0.66)">109</span></span></div>
<svg class="ri" style="top:231.1px" viewBox="0 0 7 7"><rect x="0.4" y="0.6" width="6.2" height="6" rx="1.4" fill="#eaf3fa"/><path d="M1.2,6 V2.6 Q1.2,1.4 2.6,1.4 H6 V3 H3.6 Q2.9,3 2.9,3.8 V6 Z" fill="#2f8fd8"/></svg>
<div class="row" style="top:230.2px"><span class="sx" style="width:11.22px"><span style="transform:scaleX(0.44)">フィレット</span></span><span class="sx" style="width:7.52px;font-size:1.34em;line-height:0;font-weight:bold;position:relative;top:0.55px"><span style="transform:scaleX(0.66)">110</span></span></div>
<div class="arw" style="top:240.9px"></div>
<svg class="ri" style="top:239.8px" viewBox="0 0 7 7"><path d="M0.4,4.4 L3.6,2 L6.4,3.4 L3.2,6.2 Z" fill="#3a9ad9"/><path d="M3.4,2.4 L5.6,0.4 L6.6,1 L4.6,3.2 Z" fill="#e6eef4"/></svg>
<div class="row" style="top:238.9px"><span class="sx" style="width:11.22px"><span style="transform:scaleX(0.44)">サーフェス</span></span><span class="sx" style="width:1.50px;font-size:1.34em;line-height:0;font-weight:bold;position:relative;top:0.55px"><span style="transform:scaleX(0.66)">-</span></span><span class="sx" style="width:5.02px"><span style="transform:scaleX(0.985)">押</span></span><span class="sx" style="width:4.49px"><span style="transform:scaleX(0.88)">し</span></span><span class="sx" style="width:5.02px"><span style="transform:scaleX(0.985)">出</span></span><span class="sx" style="width:4.49px"><span style="transform:scaleX(0.88)">し</span></span><span class="sx" style="width:5.02px;font-size:1.34em;line-height:0;font-weight:bold;position:relative;top:0.55px"><span style="transform:scaleX(0.66)">10</span></span></div>
<svg class="ri" style="top:248.5px" viewBox="0 0 7 7"><path d="M0.4,5 L3.4,3.4 L6.6,4.6 L3.4,6.6 Z" fill="#e6eef4"/><path d="M1,2.6 Q3.4,0.2 6,2.4 L4.6,3.4 Q3.4,2.4 2.2,3.4 Z" fill="#3a9ad9"/></svg>
<div class="row" style="top:247.6px"><span class="sx" style="width:11.22px"><span style="transform:scaleX(0.44)">サーフェス</span></span><span class="sx" style="width:1.50px;font-size:1.34em;line-height:0;font-weight:bold;position:relative;top:0.55px"><span style="transform:scaleX(0.66)">-</span></span><span class="sx" style="width:11.22px"><span style="transform:scaleX(0.44)">オフセット</span></span><span class="sx" style="width:5.02px;font-size:1.34em;line-height:0;font-weight:bold;position:relative;top:0.55px"><span style="transform:scaleX(0.66)">12</span></span></div>
<svg class="ri" style="top:257.2px" viewBox="0 0 7 7"><path d="M0.4,5 L3.4,3.4 L6.6,4.6 L3.4,6.6 Z" fill="#e6eef4"/><path d="M1,2.6 Q3.4,0.2 6,2.4 L4.6,3.4 Q3.4,2.4 2.2,3.4 Z" fill="#3a9ad9"/></svg>
<div class="row" style="top:256.3px"><span class="sx" style="width:11.22px"><span style="transform:scaleX(0.44)">サーフェス</span></span><span class="sx" style="width:1.50px;font-size:1.34em;line-height:0;font-weight:bold;position:relative;top:0.55px"><span style="transform:scaleX(0.66)">-</span></span><span class="sx" style="width:6.73px"><span style="transform:scaleX(0.44)">トリム</span></span><span class="sx" style="width:2.51px;font-size:1.34em;line-height:0;font-weight:bold;position:relative;top:0.55px"><span style="transform:scaleX(0.66)">6</span></span></div>
<svg class="ri" style="top:265.9px" viewBox="0 0 7 7"><path d="M3.4,0.4 Q6.4,1 6,4 Q5.6,6.4 3.4,6.6 Z" fill="#2f8fd8"/><path d="M3,0.4 Q0.4,1 0.8,4 Q1.2,6.4 3,6.6 Z" fill="#e6eef4"/></svg>
<div class="row" style="top:265.0px"><span class="sx" style="width:20.09px"><span style="transform:scaleX(0.985)">部品分割</span></span><span class="sx" style="width:2.51px;font-size:1.34em;line-height:0;font-weight:bold;position:relative;top:0.55px"><span style="transform:scaleX(0.66)">8</span></span></div>
<svg class="ri" style="top:274.6px" viewBox="0 0 7 7"><rect x="0.4" y="0.6" width="6.2" height="6" rx="1.4" fill="#eaf3fa"/><path d="M1.2,6 V2.6 Q1.2,1.4 2.6,1.4 H6 V3 H3.6 Q2.9,3 2.9,3.8 V6 Z" fill="#2f8fd8"/></svg>
<div class="row" style="top:273.7px"><span class="sx" style="width:11.22px"><span style="transform:scaleX(0.44)">フィレット</span></span><span class="sx" style="width:7.52px;font-size:1.34em;line-height:0;font-weight:bold;position:relative;top:0.55px"><span style="transform:scaleX(0.66)">114</span></span></div>
<svg class="ri" style="top:283.3px" viewBox="0 0 7 7"><rect x="0.4" y="0.6" width="6.2" height="6" rx="1.4" fill="#eaf3fa"/><path d="M1.2,6 V2.6 Q1.2,1.4 2.6,1.4 H6 V3 H3.6 Q2.9,3 2.9,3.8 V6 Z" fill="#2f8fd8"/></svg>
<div class="row" style="top:282.4px"><span class="sx" style="width:11.22px"><span style="transform:scaleX(0.44)">フィレット</span></span><span class="sx" style="width:7.52px;font-size:1.34em;line-height:0;font-weight:bold;position:relative;top:0.55px"><span style="transform:scaleX(0.66)">115</span></span></div>
<svg class="ri" style="top:292.0px" viewBox="0 0 7 7"><path d="M3.5,2 V5 M2,3.5 H5 M2.4,2.4 L4.6,4.6 M4.6,2.4 L2.4,4.6" stroke="#bdbdbd" stroke-width="0.6"/></svg>
<div class="row" style="top:291.1px"><span class="sx" style="width:5.02px"><span style="transform:scaleX(0.985)">点</span></span><span class="sx" style="width:2.51px;font-size:1.34em;line-height:0;font-weight:bold;position:relative;top:0.55px"><span style="transform:scaleX(0.66)">2</span></span></div>
<svg class="ri" style="top:300.7px" viewBox="0 0 7 7"><path d="M2,0.6 L4.6,0.2 L4.6,5.6 L2,6.6 Z" fill="#3a9ad9"/></svg>
<div class="row" style="top:299.8px"><span class="sx" style="width:10.05px"><span style="transform:scaleX(0.985)">平面</span></span><span class="sx" style="width:5.02px;font-size:1.34em;line-height:0;font-weight:bold;position:relative;top:0.55px"><span style="transform:scaleX(0.66)">19</span></span></div>
<div class="arw" style="top:310.5px"></div>
<svg class="ri" style="top:309.4px" viewBox="0 0 7 7"><path d="M0.4,4.4 L3.6,2 L6.4,3.4 L3.2,6.2 Z" fill="#3a9ad9"/><path d="M3.4,2.4 L5.6,0.4 L6.6,1 L4.6,3.2 Z" fill="#e6eef4"/></svg>
<div class="row" style="top:308.5px"><span class="sx" style="width:11.22px"><span style="transform:scaleX(0.44)">サーフェス</span></span><span class="sx" style="width:1.50px;font-size:1.34em;line-height:0;font-weight:bold;position:relative;top:0.55px"><span style="transform:scaleX(0.66)">-</span></span><span class="sx" style="width:5.02px"><span style="transform:scaleX(0.985)">押</span></span><span class="sx" style="width:4.49px"><span style="transform:scaleX(0.88)">し</span></span><span class="sx" style="width:5.02px"><span style="transform:scaleX(0.985)">出</span></span><span class="sx" style="width:4.49px"><span style="transform:scaleX(0.88)">し</span></span><span class="sx" style="width:5.02px;font-size:1.34em;line-height:0;font-weight:bold;position:relative;top:0.55px"><span style="transform:scaleX(0.66)">11</span></span></div>
<svg class="ri" style="top:318.1px" viewBox="0 0 7 7"><path d="M0.4,5 L3.4,3.4 L6.6,4.6 L3.4,6.6 Z" fill="#e6eef4"/><path d="M1,2.6 Q3.4,0.2 6,2.4 L4.6,3.4 Q3.4,2.4 2.2,3.4 Z" fill="#3a9ad9"/></svg>
<div class="row" style="top:317.2px"><span class="sx" style="width:11.22px"><span style="transform:scaleX(0.44)">サーフェス</span></span><span class="sx" style="width:1.50px;font-size:1.34em;line-height:0;font-weight:bold;position:relative;top:0.55px"><span style="transform:scaleX(0.66)">-</span></span><span class="sx" style="width:11.22px"><span style="transform:scaleX(0.44)">オフセット</span></span><span class="sx" style="width:5.02px;font-size:1.34em;line-height:0;font-weight:bold;position:relative;top:0.55px"><span style="transform:scaleX(0.66)">13</span></span></div>
<div class="arw" style="top:327.9px"></div>
<svg class="ri" style="top:326.8px" viewBox="0 0 7 7"><path d="M0.4,4.4 L3.6,2 L6.4,3.4 L3.2,6.2 Z" fill="#3a9ad9"/><path d="M3.4,2.4 L5.6,0.4 L6.6,1 L4.6,3.2 Z" fill="#e6eef4"/></svg>
<div class="row" style="top:325.9px"><span class="sx" style="width:11.22px"><span style="transform:scaleX(0.44)">サーフェス</span></span><span class="sx" style="width:1.50px;font-size:1.34em;line-height:0;font-weight:bold;position:relative;top:0.55px"><span style="transform:scaleX(0.66)">-</span></span><span class="sx" style="width:5.02px"><span style="transform:scaleX(0.985)">押</span></span><span class="sx" style="width:4.49px"><span style="transform:scaleX(0.88)">し</span></span><span class="sx" style="width:5.02px"><span style="transform:scaleX(0.985)">出</span></span><span class="sx" style="width:4.49px"><span style="transform:scaleX(0.88)">し</span></span><span class="sx" style="width:5.02px;font-size:1.34em;line-height:0;font-weight:bold;position:relative;top:0.55px"><span style="transform:scaleX(0.66)">12</span></span></div>
<svg class="ri" style="top:335.5px" viewBox="0 0 7 7"><path d="M0.4,5 L3.4,3.4 L6.6,4.6 L3.4,6.6 Z" fill="#e6eef4"/><path d="M1,2.6 Q3.4,0.2 6,2.4 L4.6,3.4 Q3.4,2.4 2.2,3.4 Z" fill="#3a9ad9"/></svg>
<div class="row" style="top:334.6px"><span class="sx" style="width:11.22px"><span style="transform:scaleX(0.44)">サーフェス</span></span><span class="sx" style="width:1.50px;font-size:1.34em;line-height:0;font-weight:bold;position:relative;top:0.55px"><span style="transform:scaleX(0.66)">-</span></span><span class="sx" style="width:11.22px"><span style="transform:scaleX(0.44)">オフセット</span></span><span class="sx" style="width:5.02px;font-size:1.34em;line-height:0;font-weight:bold;position:relative;top:0.55px"><span style="transform:scaleX(0.66)">14</span></span></div>
<svg class="ri" style="top:344.2px" viewBox="0 0 7 7"><path d="M0.4,5 L3.4,3.4 L6.6,4.6 L3.4,6.6 Z" fill="#e6eef4"/><path d="M1,2.6 Q3.4,0.2 6,2.4 L4.6,3.4 Q3.4,2.4 2.2,3.4 Z" fill="#3a9ad9"/></svg>
<div class="row" style="top:343.3px"><span class="sx" style="width:11.22px"><span style="transform:scaleX(0.44)">サーフェス</span></span><span class="sx" style="width:1.50px;font-size:1.34em;line-height:0;font-weight:bold;position:relative;top:0.55px"><span style="transform:scaleX(0.66)">-</span></span><span class="sx" style="width:10.05px"><span style="transform:scaleX(0.985)">延長</span></span><span class="sx" style="width:2.51px;font-size:1.34em;line-height:0;font-weight:bold;position:relative;top:0.55px"><span style="transform:scaleX(0.66)">4</span></span></div>
<div class="arw" style="top:354.0px"></div>
<svg class="ri" style="top:352.9px" viewBox="0 0 7 7"><path d="M0.4,5 L3.4,3.4 L6.6,4.6 L3.4,6.6 Z" fill="#e6eef4"/><path d="M1,2.6 Q3.4,0.2 6,2.4 L4.6,3.4 Q3.4,2.4 2.2,3.4 Z" fill="#3a9ad9"/></svg>
<div class="row" style="top:352.0px"><span class="sx" style="width:11.22px"><span style="transform:scaleX(0.44)">サーフェス</span></span><span class="sx" style="width:1.50px;font-size:1.34em;line-height:0;font-weight:bold;position:relative;top:0.55px"><span style="transform:scaleX(0.66)">-</span></span><span class="sx" style="width:6.73px"><span style="transform:scaleX(0.44)">トリム</span></span><span class="sx" style="width:2.51px;font-size:1.34em;line-height:0;font-weight:bold;position:relative;top:0.55px"><span style="transform:scaleX(0.66)">7</span></span></div>
<div class="arw" style="top:362.7px"></div>
<svg class="ri" style="top:361.6px" viewBox="0 0 7 7"><path d="M0.4,4.4 L3.6,2 L6.4,3.4 L3.2,6.2 Z" fill="#3a9ad9"/><path d="M3.4,2.4 L5.6,0.4 L6.6,1 L4.6,3.2 Z" fill="#e6eef4"/></svg>
<div class="row" style="top:360.7px"><span class="sx" style="width:10.05px"><span style="transform:scaleX(0.985)">境界</span></span><span class="sx" style="width:4.01px;font-size:1.34em;line-height:0;font-weight:bold;position:relative;top:0.55px"><span style="transform:scaleX(0.66)"> - </span></span><span class="sx" style="width:11.22px"><span style="transform:scaleX(0.44)">サーフェス</span></span><span class="sx" style="width:5.02px;font-size:1.34em;line-height:0;font-weight:bold;position:relative;top:0.55px"><span style="transform:scaleX(0.66)">18</span></span></div>
<svg class="ri" style="top:370.3px" viewBox="0 0 7 7"><rect x="0.6" y="0.6" width="2.5" height="5.8" fill="#f2f2f2"/><rect x="3.9" y="0.6" width="2.5" height="5.8" fill="#f2f2f2"/></svg>
<div class="row" style="top:369.4px"><span class="sx" style="width:11.22px"><span style="transform:scaleX(0.44)">サーフェス</span></span><span class="sx" style="width:1.50px;font-size:1.34em;line-height:0;font-weight:bold;position:relative;top:0.55px"><span style="transform:scaleX(0.66)">-</span></span><span class="sx" style="width:5.02px"><span style="transform:scaleX(0.985)">編</span></span><span class="sx" style="width:4.49px"><span style="transform:scaleX(0.88)">み</span></span><span class="sx" style="width:5.02px"><span style="transform:scaleX(0.985)">合</span></span><span class="sx" style="width:8.98px"><span style="transform:scaleX(0.88)">わせ</span></span><span class="sx" style="width:2.51px;font-size:1.34em;line-height:0;font-weight:bold;position:relative;top:0.55px"><span style="transform:scaleX(0.66)">2</span></span></div>
<svg class="ri" style="top:379.0px" viewBox="0 0 7 7"><path d="M2,0.6 L4.6,0.2 L4.6,5.6 L2,6.6 Z" fill="#3a9ad9"/></svg>
<div class="row" style="top:378.1px"><span class="sx" style="width:10.05px"><span style="transform:scaleX(0.985)">平面</span></span><span class="sx" style="width:5.02px;font-size:1.34em;line-height:0;font-weight:bold;position:relative;top:0.55px"><span style="transform:scaleX(0.66)">20</span></span></div>
<svg class="ri" style="top:387.7px" viewBox="0 0 7 7"><path d="M0.6,1 L2.8,2 L2.8,6 L0.6,5 Z" fill="#e6eef4"/><path d="M6.4,1 L4.2,2 L4.2,6 L6.4,5 Z" fill="#3a9ad9"/></svg>
<div class="row" style="top:386.8px"><span class="sx" style="width:6.73px"><span style="transform:scaleX(0.44)">ミラー</span></span><span class="sx" style="width:2.51px;font-size:1.34em;line-height:0;font-weight:bold;position:relative;top:0.55px"><span style="transform:scaleX(0.66)">1</span></span></div>
<svg class="ri" style="top:396.4px" viewBox="0 0 7 7"><rect x="0.6" y="0.6" width="2.5" height="5.8" fill="#f2f2f2"/><rect x="3.9" y="0.6" width="2.5" height="5.8" fill="#f2f2f2"/></svg>
<div class="row" style="top:395.5px"><span class="sx" style="width:11.22px"><span style="transform:scaleX(0.44)">サーフェス</span></span><span class="sx" style="width:1.50px;font-size:1.34em;line-height:0;font-weight:bold;position:relative;top:0.55px"><span style="transform:scaleX(0.66)">-</span></span><span class="sx" style="width:5.02px"><span style="transform:scaleX(0.985)">編</span></span><span class="sx" style="width:4.49px"><span style="transform:scaleX(0.88)">み</span></span><span class="sx" style="width:5.02px"><span style="transform:scaleX(0.985)">合</span></span><span class="sx" style="width:8.98px"><span style="transform:scaleX(0.88)">わせ</span></span><span class="sx" style="width:2.51px;font-size:1.34em;line-height:0;font-weight:bold;position:relative;top:0.55px"><span style="transform:scaleX(0.66)">3</span></span></div>
<svg class="ri" style="top:405.1px" viewBox="0 0 7 7"><path d="M0.6,1 L2.8,2 L2.8,6 L0.6,5 Z" fill="#e6eef4"/><path d="M6.4,1 L4.2,2 L4.2,6 L6.4,5 Z" fill="#3a9ad9"/></svg>
<div class="row" style="top:404.2px"><span class="sx" style="width:6.73px"><span style="transform:scaleX(0.44)">ミラー</span></span><span class="sx" style="width:2.51px;font-size:1.34em;line-height:0;font-weight:bold;position:relative;top:0.55px"><span style="transform:scaleX(0.66)">2</span></span></div>
<svg class="ri" style="top:413.8px" viewBox="0 0 7 7"><rect x="0.4" y="0.6" width="6.2" height="6" rx="1.4" fill="#eaf3fa"/><path d="M1.2,6 V2.6 Q1.2,1.4 2.6,1.4 H6 V3 H3.6 Q2.9,3 2.9,3.8 V6 Z" fill="#2f8fd8"/></svg>
<div class="row" style="top:412.9px"><span class="sx" style="width:11.22px"><span style="transform:scaleX(0.44)">サーフェス</span></span><span class="sx" style="width:1.50px;font-size:1.34em;line-height:0;font-weight:bold;position:relative;top:0.55px"><span style="transform:scaleX(0.66)">-</span></span><span class="sx" style="width:6.73px"><span style="transform:scaleX(0.44)">カット</span></span><span class="sx" style="width:5.02px;font-size:1.34em;line-height:0;font-weight:bold;position:relative;top:0.55px"><span style="transform:scaleX(0.66)">15</span></span></div>
<svg class="ri" style="top:422.5px" viewBox="0 0 7 7"><rect x="0.4" y="0.6" width="6.2" height="6" rx="1.4" fill="#eaf3fa"/><path d="M1.2,6 V2.6 Q1.2,1.4 2.6,1.4 H6 V3 H3.6 Q2.9,3 2.9,3.8 V6 Z" fill="#2f8fd8"/></svg>
<div class="row" style="top:421.6px"><span class="sx" style="width:11.22px"><span style="transform:scaleX(0.44)">サーフェス</span></span><span class="sx" style="width:1.50px;font-size:1.34em;line-height:0;font-weight:bold;position:relative;top:0.55px"><span style="transform:scaleX(0.66)">-</span></span><span class="sx" style="width:6.73px"><span style="transform:scaleX(0.44)">カット</span></span><span class="sx" style="width:5.02px;font-size:1.34em;line-height:0;font-weight:bold;position:relative;top:0.55px"><span style="transform:scaleX(0.66)">20</span></span></div>
<svg class="ri" style="top:431.2px" viewBox="0 0 7 7"><rect x="0.4" y="0.6" width="6.2" height="6" rx="1.4" fill="#eaf3fa"/><path d="M1.2,6 V2.6 Q1.2,1.4 2.6,1.4 H6 V3 H3.6 Q2.9,3 2.9,3.8 V6 Z" fill="#2f8fd8"/></svg>
<div class="row" style="top:430.3px"><span class="sx" style="width:11.22px"><span style="transform:scaleX(0.44)">フィレット</span></span><span class="sx" style="width:7.52px;font-size:1.34em;line-height:0;font-weight:bold;position:relative;top:0.55px"><span style="transform:scaleX(0.66)">118</span></span></div>
<svg class="ri" style="top:439.9px" viewBox="0 0 7 7"><rect x="0.4" y="0.6" width="6.2" height="6" rx="1.4" fill="#eaf3fa"/><path d="M1.2,6 V2.6 Q1.2,1.4 2.6,1.4 H6 V3 H3.6 Q2.9,3 2.9,3.8 V6 Z" fill="#2f8fd8"/></svg>
<div class="row" style="top:439.0px"><span class="sx" style="width:11.22px"><span style="transform:scaleX(0.44)">フィレット</span></span><span class="sx" style="width:7.52px;font-size:1.34em;line-height:0;font-weight:bold;position:relative;top:0.55px"><span style="transform:scaleX(0.66)">119</span></span></div>
</div>
<div class="abs" style="left:95.5px;top:270px;width:3.6px;height:15px;background:#333;border:0.5px solid #5a5a5a;box-sizing:border-box"></div><div class="abs" style="left:96.3px;top:276px;width:2.2px;height:2.2px;border-radius:50%;background:#f2f2f2"></div>
<svg class="abs" style="left:100px;top:44px" width="77" height="10" viewBox="0 0 77 10"><rect x="0" y="0" width="76.5" height="10" fill="#86abc9"/><path d="M0,0 H58.5 L62,5 L58.5,10 H0 Z" fill="#cdcdcd"/><rect x="63.4" y="1.4" width="7.6" height="7" fill="#3f86b8"/><rect x="64.2" y="2.2" width="6" height="5.4" fill="#5b9ccb"/></svg>
<svg class="abs" style="left:105.2px;top:44.8px" width="8.4" height="8.4" viewBox="0 0 9 9"><path d="M2,3 Q2,0.8 4,1 Q6.5,1.2 6.5,3.2 L7.6,6 Q7.6,8.2 5,8 Q1.5,7.6 1.6,5 Z" fill="#d9aa1f"/><circle cx="4.3" cy="4.6" r="1.1" fill="#a87c0c"/></svg>
<svg class="abs" style="left:118.8px;top:45px" width="8" height="8" viewBox="0 0 8 8"><path d="M1,2.2 Q4,0.6 7,2.2 V6 Q4,7.8 1,6 Z" fill="#2f8fd0"/><ellipse cx="4" cy="2.3" rx="3" ry="1.1" fill="#6fc0ee"/></svg>
<svg class="abs" style="left:132.4px;top:45.2px" width="7.6" height="7.6" viewBox="0 0 7 7"><rect x="0.4" y="0.6" width="6.2" height="6" rx="1.4" fill="#f4f8fb" stroke="#5a6e7a" stroke-width="0.6"/><path d="M1.6,5.8 V3.2 Q1.6,2 3,2 H5.8 V3.4 H3.8 Q3.2,3.4 3.2,4 V5.8 Z" fill="#2f9fd8"/></svg>
<div class="abs" style="left:142.2px;top:46px;font-size:4.6px;line-height:6px;color:#3a3a3a;white-space:nowrap;font-weight:500"><span class="sx" style="width:11.50px"><span style="transform:scaleX(0.5)">フィレット</span></span><span class="sx"><span style="transform:scaleX(0.999)">85</span></span></div>
<div class="abs" style="left:538.5px;top:31px;width:9.5px;height:9px;background:#2c2c2c;border:0.5px solid #5e5e5e;box-sizing:border-box"></div>
<svg class="abs" style="left:470.0px;top:32.0px" width="7" height="7" viewBox="0 0 7 7"><circle cx="4.2" cy="2.8" r="1.8" fill="none" stroke="#d8d8d8" stroke-width="0.8"/><path d="M2.8,4.2 L0.8,6.2" stroke="#d8d8d8" stroke-width="1"/></svg>
<svg class="abs" style="left:480.5px;top:32.0px" width="7" height="7" viewBox="0 0 7 7"><circle cx="4.2" cy="2.8" r="1.8" fill="none" stroke="#d8d8d8" stroke-width="0.8"/><path d="M2.8,4.2 L0.8,6.2" stroke="#d8d8d8" stroke-width="1"/></svg>
<svg class="abs" style="left:490.0px;top:32.0px" width="7" height="7" viewBox="0 0 7 7"><path d="M0.8,6 L2,3.6 L5.6,0.8 L6.4,1.8 L3,4.8 Z" fill="#9ec8e6"/></svg>
<svg class="abs" style="left:500.5px;top:32.0px" width="7" height="7" viewBox="0 0 7 7"><path d="M0.8,2 L3.5,0.8 L6.2,2 V5.2 L3.5,6.4 L0.8,5.2 Z" fill="#3a9ad9"/><path d="M0.8,2 L3.5,3.2 L6.2,2 L3.5,0.8 Z" fill="#8fd0f4"/></svg>
<svg class="abs" style="left:511.0px;top:32.0px" width="7" height="7" viewBox="0 0 7 7"><path d="M0.8,2 L3.5,0.8 L6.2,2 V5.2 L3.5,6.4 L0.8,5.2 Z" fill="#3a9ad9"/><path d="M0.8,2 L3.5,3.2 L6.2,2 L3.5,0.8 Z" fill="#8fd0f4"/></svg>
<svg class="abs" style="left:525.5px;top:32.0px" width="7" height="7" viewBox="0 0 7 7"><path d="M0.8,2 L3.5,0.8 L6.2,2 V5.2 L3.5,6.4 L0.8,5.2 Z" fill="#3a9ad9"/><path d="M0.8,2 L3.5,3.2 L6.2,2 L3.5,0.8 Z" fill="#8fd0f4"/></svg>
<svg class="abs" style="left:539px;top:32.0px" width="8" height="7" viewBox="0 0 8 7"><ellipse cx="4" cy="3.6" rx="3.4" ry="2.2" fill="#f2f2f2"/><circle cx="4" cy="3.6" r="1.4" fill="#1c1c1c"/></svg>
<svg class="abs" style="left:553.5px;top:32.0px" width="7" height="7" viewBox="0 0 7 7"><circle cx="3.5" cy="2.2" r="1.7" fill="#e04a3a"/><circle cx="2.1" cy="4.6" r="1.7" fill="#3a8ae0"/><circle cx="4.9" cy="4.6" r="1.7" fill="#46b04a"/></svg>
<svg class="abs" style="left:564.5px;top:32.0px" width="7" height="7" viewBox="0 0 7 7"><circle cx="3.5" cy="2.2" r="1.7" fill="#e04a3a"/><circle cx="2.1" cy="4.6" r="1.7" fill="#3a8ae0"/><circle cx="4.9" cy="4.6" r="1.7" fill="#46b04a"/></svg>
<svg class="abs" style="left:578.5px;top:32.0px" width="7" height="7" viewBox="0 0 7 7"><rect x="0.6" y="1.8" width="5.8" height="3.2" fill="#bdbdbd"/></svg>
</body></html>
